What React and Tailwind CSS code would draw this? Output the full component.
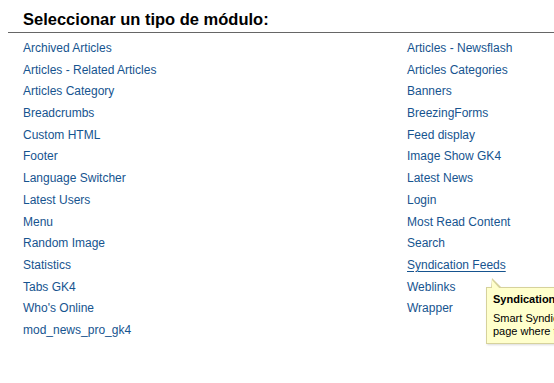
import React from 'react'

const left = [
  'Archived Articles',
  'Articles - Related Articles',
  'Articles Category',
  'Breadcrumbs',
  'Custom HTML',
  'Footer',
  'Language Switcher',
  'Latest Users',
  'Menu',
  'Random Image',
  'Statistics',
  'Tabs GK4',
  "Who's Online",
  'mod_news_pro_gk4',
]

const right = [
  'Articles - Newsflash',
  'Articles Categories',
  'Banners',
  'BreezingForms',
  'Feed display',
  'Image Show GK4',
  'Latest News',
  'Login',
  'Most Read Content',
  'Search',
  'Syndication Feeds',
  'Weblinks',
  'Wrapper',
]

function ModuleList({ items }) {
  return (
    <ul className="flex flex-col">
      {items.map((item) => (
        <li key={item} className="h-[21.7px] leading-[21.7px]">
          <a
            href="#"
            className={
              item === 'Syndication Feeds'
                ? 'text-[#16548f] underline underline-offset-2'
                : 'text-[#16548f]'
            }
          >
            {item}
          </a>
        </li>
      ))}
    </ul>
  )
}

export default function App() {
  return (
    <div
      className="relative w-[554px] h-[383px] overflow-hidden bg-white text-[12px]"
      style={{ fontFamily: '"Liberation Sans", Arial, sans-serif' }}
    >
      <div className="ml-[8px] pt-[9px] pl-[15px] pb-[3px] border-b border-[#666]">
        <h2 className="text-[16.5px] font-bold leading-[20px] text-black">
          Seleccionar un tipo de módulo:
        </h2>
      </div>

      <div className="grid grid-cols-[384px_1fr] pl-[23px] pt-[5px]">
        <ModuleList items={left} />
        <ModuleList items={right} />
      </div>

      {/* tooltip */}
      <div className="absolute left-[486px] top-[287px] w-[400px] h-[57px] bg-[#ffffcc] border border-[#d6d29c] shadow-[1px_1px_2px_rgba(0,0,0,0.15)] px-[6px] pt-[5px] text-[11px] text-black">
        <div className="absolute -top-[10px] left-[4px] w-0 h-0 border-l-[1px] border-l-transparent border-r-[10px] border-r-transparent border-b-[10px] border-b-[#d6d29c]" />
        <div className="absolute -top-[8px] left-[5px] w-0 h-0 border-r-[8px] border-r-transparent border-b-[9px] border-b-[#ffffcc]" />
        <div className="font-bold leading-[13px] whitespace-nowrap">Syndication Feeds</div>
        <div className="mt-[6px] leading-[13px]">
          Smart Syndication module that creates a syndicated feed for the
          <br />
          page where the module is displayed.
        </div>
      </div>
    </div>
  )
}
